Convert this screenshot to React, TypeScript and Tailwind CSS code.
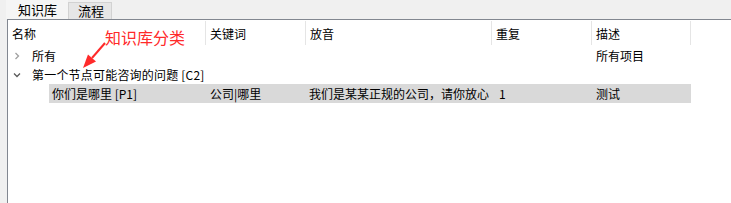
import React from "react";

const cols = [
  { label: "名称", w: "w-[198px]" },
  { label: "关键词", w: "w-[100px]" },
  { label: "放音", w: "w-[186px]" },
  { label: "重复", w: "w-[100px]" },
  { label: "描述", w: "w-[99px]" },
];

function Chevron({ open }: { open: boolean }) {
  return (
    <svg width="8" height="8" viewBox="0 0 8 8" className="shrink-0">
      {open ? (
        <path d="M1 2.5 L4 5.5 L7 2.5" fill="none" stroke="#5a5a5a" strokeWidth="1.3" />
      ) : (
        <path d="M2.5 1 L5.5 4 L2.5 7" fill="none" stroke="#a0a0a0" strokeWidth="1.3" />
      )}
    </svg>
  );
}

export default function App() {
  return (
    <div
      className="w-[731px] h-[203px] bg-[#f0f0f0] flex flex-col overflow-hidden text-[12px] text-black"
      style={{ fontFamily: '"Noto Sans CJK SC", "Noto Sans", sans-serif' }}
    >
      {/* tabs */}
      <div className="h-[19px] flex items-end pl-[6px] shrink-0">
        <div className="w-[62px] h-[19px] bg-[#f5f5f5] flex items-center pl-[12px] text-[13px]">知识库</div>
        <div className="w-[44px] h-[17px] bg-[#e6e6e6] border border-b-0 border-[#d2d2d2] flex items-center pl-[9px] text-[13px]">
          流程
        </div>
      </div>

      {/* panel */}
      <div className="flex-1 ml-[7px] bg-white border-l border-t border-[#828790] relative">
        {/* header */}
        <div className="flex h-[26px] items-center">
          {cols.map((c) => (
            <div key={c.label} className={`${c.w} h-[24px] border-r border-[#e5e5e5] flex items-center pl-[4px] pt-[1px]`}>
              {c.label}
            </div>
          ))}
        </div>

        {/* row 1 */}
        <div className="flex h-[19px] items-center">
          <div className="w-[198px] flex items-center pl-[5px] gap-[11px]">
            <Chevron open={false} />
            <span>所有</span>
          </div>
          <div className="w-[100px]" />
          <div className="w-[186px]" />
          <div className="w-[100px]" />
          <div className="w-[99px] pl-[4px]">所有项目</div>
        </div>

        {/* row 2 */}
        <div className="flex h-[19px] items-center">
          <div className="flex items-center pl-[5px] gap-[11px] whitespace-nowrap">
            <Chevron open={true} />
            <span className="tracking-[0.2px]">第一个节点可能咨询的问题 [C2]</span>
          </div>
        </div>

        {/* row 3 selected */}
        <div className="flex h-[19px] items-center">
          <div className="w-[41px]" />
          <div className="flex h-[19px] items-center bg-[#d9d9d9] whitespace-nowrap">
            <div className="w-[157px] pl-[3px]">你们是哪里 [P1]</div>
            <div className="w-[100px] pl-[4px]">公司|哪里</div>
            <div className="w-[186px] pl-[3px]">我们是某某正规的公司，请你放心</div>
            <div className="w-[100px] pl-[7px]">1</div>
            <div className="w-[99px] pl-[4px]">测试</div>
          </div>
        </div>

        {/* annotation */}
        <div className="absolute left-[97px] top-[5px] text-[16px] text-[#ff2a2a] whitespace-nowrap">知识库分类</div>
        <svg className="absolute left-[70px] top-[19px]" width="32" height="32" viewBox="0 0 32 32">
          <line x1="27" y1="4" x2="14" y2="19" stroke="#ff2a2a" strokeWidth="2" />
          <polygon points="5,29 18,22.5 10,15.5" fill="#ff2a2a" />
        </svg>
      </div>
    </div>
  );
}
